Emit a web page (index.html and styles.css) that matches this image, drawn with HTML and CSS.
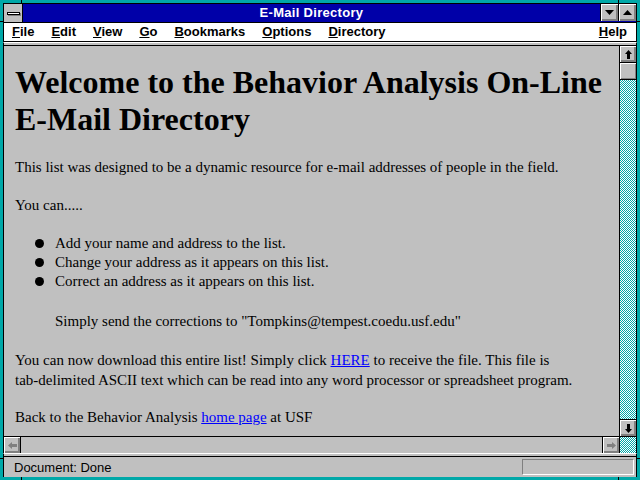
FILE: index.html
```html
<!DOCTYPE html>
<html lang="en">
<head>
    <meta charset="UTF-8">
    <title>E-Mail Directory</title>
    <link rel="stylesheet" href="styles.css">
</head>
<body>

<div class="window">
    <!-- notches of the sizing border -->
    <span class="notch notch-tl-v"></span>
    <span class="notch notch-tl-h"></span>
    <span class="notch notch-tr-v"></span>
    <span class="notch notch-tr-h"></span>
    <span class="notch notch-bl-v"></span>
    <span class="notch notch-bl-h"></span>
    <span class="notch notch-br-v"></span>
    <span class="notch notch-br-h"></span>

    <!-- title bar -->
    <div class="titlebar">
        <div class="sysbox"><span class="sysbar"></span></div>
        <div class="title">E-Mail Directory</div>
        <div class="capbtn">
            <svg width="9" height="5" viewBox="0 0 9 5"><polygon points="0,0 9,0 4.5,5" fill="#000"/></svg>
        </div>
        <div class="capbtn">
            <svg width="9" height="5" viewBox="0 0 9 5"><polygon points="0,5 9,5 4.5,0" fill="#000"/></svg>
        </div>
    </div>

    <!-- menu -->
    <div class="menubar">
        <span class="menu-item"><u>F</u>ile</span>
        <span class="menu-item"><u>E</u>dit</span>
        <span class="menu-item"><u>V</u>iew</span>
        <span class="menu-item"><u>G</u>o</span>
        <span class="menu-item"><u>B</u>ookmarks</span>
        <span class="menu-item"><u>O</u>ptions</span>
        <span class="menu-item"><u>D</u>irectory</span>
        <span class="menu-item help"><u>H</u>elp</span>
    </div>
    <div class="strip"></div>

    <!-- document area -->
    <div class="viewport">
        <div class="content-row">
            <div class="page">
                <h1>Welcome to the Behavior Analysis On-Line E-Mail Directory</h1>

                <p>This list was designed to be a dynamic resource for e-mail addresses of people in the field.</p>

                <p>You can.....</p>

                <ul class="bullets">
                    <li>Add your name and address to the list.</li>
                    <li>Change your address as it appears on this list.</li>
                    <li>Correct an address as it appears on this list.</li>
                </ul>

                <p class="indent">Simply send the corrections to "Tompkins@tempest.coedu.usf.edu"</p>

                <p class="tall">You can now download this entire list! Simply click <a href="#">HERE</a> to receive the file. This file is<br>tab-delimited ASCII text which can be read into any word processor or spreadsheet program.</p>

                <p>Back to the Behavior Analysis <a href="#">home page</a> at USF</p>
            </div>

            <div class="vscroll">
                <div class="sbtn">
                    <svg width="7" height="9" viewBox="0 0 7 9"><polygon points="3.5,0 7,4 5,4 5,9 2,9 2,4 0,4" fill="#000"/></svg>
                </div>
                <div class="thumb"></div>
                <div class="track"></div>
                <div class="sbtn">
                    <svg width="7" height="9" viewBox="0 0 7 9"><polygon points="3.5,9 7,5 5,5 5,0 2,0 2,5 0,5" fill="#000"/></svg>
                </div>
            </div>
        </div>

        <div class="hscroll">
            <div class="sbtn off">
                <svg width="9" height="7" viewBox="0 0 9 7"><polygon points="0,3.5 4,0 4,2 9,2 9,5 4,5 4,7" fill="#808080"/></svg>
            </div>
            <div class="htrack"></div>
            <div class="sbtn off">
                <svg width="9" height="7" viewBox="0 0 9 7"><polygon points="9,3.5 5,0 5,2 0,2 0,5 5,5 5,7" fill="#808080"/></svg>
            </div>
            <div class="corner"></div>
        </div>
    </div>
    <div class="strip"></div>

    <!-- status -->
    <div class="statusbar">
        <span class="status-text">Document: Done</span>
        <span class="progress"></span>
    </div>
</div>

</body>
</html>
```

FILE: styles.css
```css
body {
    margin: 0;
    padding: 0;
    width: 640px;
    height: 480px;
    overflow: hidden;
    background-color: #00a8a8;
}

.window {
    position: relative;
    box-sizing: border-box;
    width: 640px;
    height: 480px;
    border: 3px solid #00a8a8;
    display: flex;
    flex-direction: column;
}

.window > *:not(.notch) {
    border-left: 1px solid #000;
    border-right: 1px solid #000;
}

/* sizing notches */
.notch {
    position: absolute;
    background-color: #000;
}

.notch-tl-v { left: 18px; top: -3px; width: 1px; height: 3px; }
.notch-tl-h { left: -3px; top: 18px; width: 3px; height: 1px; }
.notch-tr-v { right: 18px; top: -3px; width: 1px; height: 3px; }
.notch-tr-h { right: -3px; top: 18px; width: 3px; height: 1px; }
.notch-bl-v { left: 18px; bottom: -3px; width: 1px; height: 3px; }
.notch-bl-h { left: -3px; bottom: 18px; width: 3px; height: 1px; }
.notch-br-v { right: 18px; bottom: -3px; width: 1px; height: 3px; }
.notch-br-h { right: -3px; bottom: 18px; width: 3px; height: 1px; }

/* Title bar */
.titlebar {
    display: flex;
    height: 18px;
    background-color: #0000a8;
    border-top: 1px solid #000;
    border-bottom: 1px solid #000;
}

.sysbox {
    width: 18px;
    background-color: #c0c0c0;
    border-right: 1px solid #000;
    display: flex;
    align-items: center;
    justify-content: center;
}

.sysbar {
    display: block;
    width: 11px;
    height: 1px;
    background-color: #fff;
    border: 1px solid #000;
    box-shadow: 1px 1px 0 #808080;
}

.title {
    flex: 1;
    text-align: center;
    color: white;
    font-family: "Liberation Sans", Arial, sans-serif;
    font-weight: bold;
    font-size: 13px;
    line-height: 18px;
    letter-spacing: 0.3px;
}

.capbtn {
    width: 17px;
    height: 17px;
    background-color: #c0c0c0;
    border-left: 1px solid #000;
    box-shadow: inset 1px 1px 0 #fff, inset -1px -1px 0 #808080, inset -2px -2px 0 #808080;
    display: flex;
    align-items: center;
    justify-content: center;
}

/* Menu */
.menubar {
    display: flex;
    height: 18px;
    background-color: white;
    border-bottom: 1px solid #000;
    font-family: "Liberation Sans", Arial, sans-serif;
    font-weight: bold;
    font-size: 13px;
    line-height: 18px;
    padding-left: 8px;
    padding-right: 8px;
}

.menu-item {
    margin-right: 17px;
    color: #000;
}

.menu-item.help {
    margin-left: auto;
    margin-right: 1px;
}

.strip {
    height: 2px;
    background-color: #c0c0c0;
    border-top: 1px solid #fff;
    border-bottom: 1px solid #000;
}

/* Document area */
.viewport {
    flex: 1;
    display: flex;
    flex-direction: column;
    min-height: 0;
}

.content-row {
    flex: 1;
    display: flex;
    min-height: 0;
}

.page {
    flex: 1;
    background-color: #c0c0c0;
    padding: 0 11px;
    font-family: "Liberation Serif", "Times New Roman", serif;
    font-size: 15px;
    line-height: 19px;
    color: #000;
    overflow: hidden;
}

h1 {
    font-size: 32px;
    line-height: 37px;
    margin: 18px 0 20px 0;
}

p {
    margin: 0 0 19px 0;
}

p.tall {
    line-height: 20px;
    margin-top: 19px;
    margin-bottom: 18px;
}

a {
    color: #0000ff;
}

.bullets {
    list-style: none;
    padding: 0 0 0 40px;
    margin: 0 0 21px 0;
}

.bullets li {
    position: relative;
}

.bullets li::before {
    content: "";
    position: absolute;
    left: -20px;
    top: 5px;
    width: 9px;
    height: 9px;
    border-radius: 50%;
    background-color: #000;
}

.indent {
    margin-left: 40px;
}

/* Scrollbars */
.vscroll {
    width: 16px;
    border-left: 1px solid #000;
    display: flex;
    flex-direction: column;
}

.sbtn {
    width: 16px;
    height: 16px;
    box-sizing: border-box;
    background-color: #c0c0c0;
    box-shadow: inset 1px 1px 0 #fff, inset -1px -1px 0 #808080, inset -2px -2px 0 #808080;
    display: flex;
    align-items: center;
    justify-content: center;
    flex-shrink: 0;
}

.vscroll .sbtn:first-child {
    border-bottom: 1px solid #000;
    height: 17px;
}

.vscroll .sbtn:last-child {
    border-top: 1px solid #000;
    height: 17px;
}

.thumb {
    height: 16px;
    background-color: #c0c0c0;
    border-bottom: 1px solid #000;
    box-shadow: inset 1px 1px 0 #fff, inset -1px -1px 0 #808080;
}

.track,
.corner {
    background-color: #00a8a8;
    background-image: repeating-conic-gradient(#ffffff 0 25%, #00a8a8 0 50%);
    background-size: 2px 2px;
}

.track {
    flex: 1;
}

.hscroll {
    display: flex;
    height: 16px;
    border-top: 1px solid #000;
}

.hscroll .sbtn:first-child {
    border-right: 1px solid #000;
    width: 17px;
}

.hscroll .sbtn.off:nth-child(3) {
    border-left: 1px solid #000;
    width: 17px;
}

.htrack {
    flex: 1;
    background-color: #c0c0c0;
}

.corner {
    width: 16px;
    border-left: 1px solid #000;
}

/* Status bar */
.statusbar {
    display: flex;
    align-items: center;
    height: 20px;
    background-color: #c0c0c0;
    font-family: "Liberation Sans", Arial, sans-serif;
    font-size: 13px;
    padding: 0 2px 0 10px;
}

.status-text {
    flex: 1;
}

.progress {
    width: 110px;
    height: 14px;
    border-top: 1px solid #808080;
    border-left: 1px solid #808080;
    border-right: 1px solid #fff;
    border-bottom: 1px solid #fff;
}
```
